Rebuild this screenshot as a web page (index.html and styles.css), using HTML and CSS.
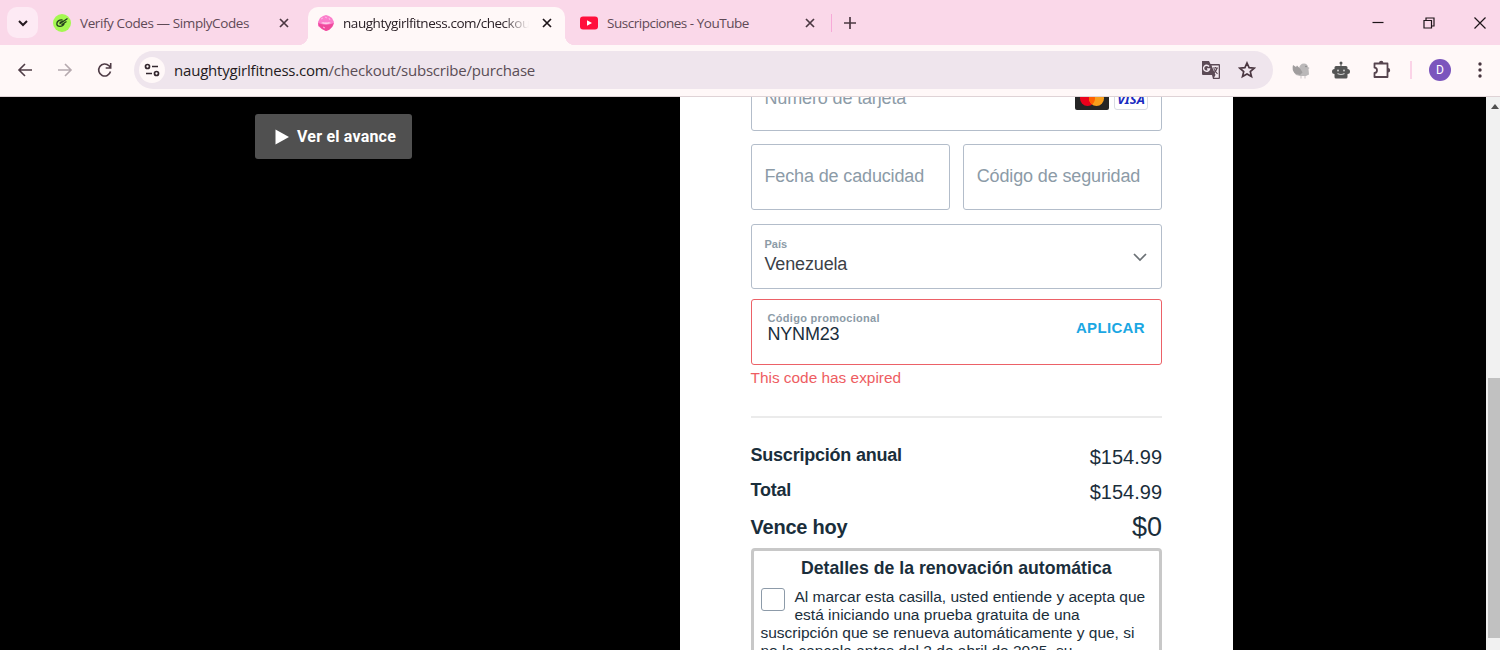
FILE: index.html
```html
<!DOCTYPE html>
<html lang="es">

<head>
    <meta charset="UTF-8">
    <meta name="viewport" content="width=device-width, initial-scale=1.0">
    <title>naughtygirlfitness.com/checkout</title>
    <link rel="stylesheet" href="styles.css">
</head>

<body>
    <div class="browser">
        <!-- tabs -->
        <div class="tabs">
            <button class="tab-search"><svg width="12" height="12" viewBox="0 0 12 12"><path d="M2 4l4 4 4-4" fill="none" stroke="#24191f" stroke-width="2"/></svg></button>
            <div class="tab first">
                <svg class="favicon" width="18" height="18" viewBox="0 0 18 18">
                    <circle cx="9" cy="9" r="9" fill="#a4f850"/>
                    <path d="M9.500 6C6 5.500 3.800 7.500 3.800 10c.2 3 5.500 3.500 7.500-.500M6.500 10l8-5.500M8.500 10.800l5-3.300M6.500 8.500l4-1.500" fill="none" stroke="#24401c" stroke-width="1.300"/>
                </svg>
                <span class="tab-title t1">Verify Codes — SimplyCodes</span>
                <svg class="close" width="10" height="10" viewBox="0 0 10 10"><path d="M1 1l8 8M9 1L1 9"/></svg>
            </div>
            <div class="tab active">
                <svg class="favicon" width="18" height="18" viewBox="0 0 18 18">
                    <path d="M1 8L3 4l3-2 3-1 3 1 3 2 2 4-1 4-3 3-4 2-4-2-4-3z" fill="#fb7ecb"/>
                    <path d="M1 9l3 1 5 1 5-1 3-1-2 4-3 3-3 1-4-2-3-3z" fill="#f04a9c"/>
                    <path d="M4 9c2-1.500 3 0 5-.800 2 .8 3-.7 5 .8-3 1.200-7 1.200-10 0z" fill="#ffd3ec"/>
                    <path d="M4 5l2-1M8 3l2 1M12 4l1 2M6 13l2 1" stroke="#ffb4e6" fill="none"/>
                </svg>
                <span class="tab-title t2">naughtygirlfitness.com/checkou</span>
                <svg class="close" width="10" height="10" viewBox="0 0 10 10"><path d="M1 1l8 8M9 1L1 9"/></svg>
            </div>
            <div class="tab last">
                <svg class="favicon" width="18" height="18" viewBox="0 0 18 18">
                    <rect y="2.500" width="18" height="13" rx="3" fill="#ff0f3c"/>
                    <path d="M7 6.300v5.400L12 9z" fill="#fff"/>
                </svg>
                <span class="tab-title t3">Suscripciones - YouTube</span>
                <svg class="close" width="10" height="10" viewBox="0 0 10 10"><path d="M1 1l8 8M9 1L1 9"/></svg>
            </div>
            <span class="tab-line"></span>
            <svg class="plus" width="12" height="12" viewBox="0 0 12 12"><path d="M6 0v12M0 6h12" stroke="#4b3842" stroke-width="1.700"/></svg>
            <!-- window buttons -->
            <div class="window-btns">
                <svg width="12" height="12" viewBox="0 0 12 12"><path d="M0.500 5.500h11"/></svg>
                <svg width="12" height="12" viewBox="0 0 12 12"><path d="M1 3.500h7.500V11H1zM3 3V1h8v8H9"/></svg>
                <svg width="12" height="12" viewBox="0 0 12 12"><path d="M0.500 0.500l11 11M11.500 0.500l-11 11"/></svg>
            </div>
        </div>

        <!-- toolbar -->
        <div class="toolbar">
            <div class="nav">
                <svg width="16" height="16" viewBox="0 0 16 16"><path d="M15 8H2M8 2L2 8l6 6"/></svg>
                <svg class="off" width="16" height="16" viewBox="0 0 16 16"><path d="M1 8h13M8 2l6 6-6 6"/></svg>
                <svg width="16" height="16" viewBox="0 0 16 16"><path d="M13.500 9.500A6 6 0 1 1 12 3.800L14 6M13.700 1v5H8.700"/></svg>
            </div>
            <div class="address">
                <span class="site-info">
                    <svg width="16" height="16" viewBox="0 0 16 16"><path d="M8 4.500h6M2 11.500h6"/><circle cx="3.500" cy="4.500" r="2"/><circle cx="12.500" cy="11.500" r="2"/></svg>
                </span>
                <span class="url"><b>naughtygirlfitness.com</b>/checkout/subscribe/purchase</span>
                <svg class="translate" width="20" height="20" viewBox="0 0 20 20">
                    <path d="M1 1h7l1.500 3H18q1 0 1 1v13q0 1-1 1h-6l-1-4H2q-1 0-1-1z" fill="#5b4a55"/>
                    <path d="M10.500 5.500H17.700V17.700H13L14.500 15z" fill="#f4eaf1"/>
                    <path d="M8 6.500A3 3 0 1 0 8.500 9H6" fill="none" stroke="#f4eaf1" stroke-width="1.400"/>
                    <path d="M12 8h5M14.500 7v1M16 8q-1 4-4 5M13 9q1 2 3.500 5" fill="none" stroke="#5b4a55" stroke-width="1.100"/>
                </svg>
                <svg class="star" width="18" height="18" viewBox="0 0 18 18"><path d="M9 2l2.100 4.700 5.100.5-3.900 3.400 1.200 5L9 13l-4.500 2.600 1.200-5-3.900-3.400 5.100-.5z" fill="none" stroke="#4b3842" stroke-width="1.700"/></svg>
            </div>
            <div class="extensions">
                <svg width="20" height="20" viewBox="0 0 20 20">
                    <path d="M8 9q.5-5.500 5-5.500 3.500 0 4 3.500l1.500 1-1 1 .5 5.500-3 1.500H9l-4-1-2-3z" fill="#bbb8b9"/>
                    <path d="M2 5l3 2 1-1.500L9.500 9l2 3.500L9 15l-5-1.500Q.5 10 2 5z" fill="#a09d9e"/>
                    <path d="M10 16v2.500M14 16v2.500" stroke="#c9c3c5"/>
                    <circle cx="15" cy="6.500" r=".7" fill="#777"/>
                </svg>
                <svg width="20" height="20" viewBox="0 0 20 20">
                    <circle cx="10" cy="3" r="1.500" fill="#555"/>
                    <path d="M9.500 3h1v3h4.500q1.500 0 1.500 1.500V9q2.500 0 2.500 2.500T16.500 14v3q0 1.500-1.500 1.500H5q-1.500 0-1.500-1.500v-3Q1 14 1 11.500T3.500 9V7.500Q3.500 6 5 6h4.500z" fill="#555"/>
                    <circle cx="7" cy="10.500" r="1" fill="#ccc"/><circle cx="13" cy="10.500" r="1" fill="#ccc"/>
                    <path d="M6.500 13.500q3.500 2 7 0" fill="none" stroke="#ccc" stroke-width="1.200"/>
                </svg>
                <svg width="20" height="20" viewBox="0 0 20 20">
                    <path d="M3.500 3.500H16.500v13.500H3.500v-4q2.500 0 2.500-2.700T3.500 7.600z" fill="none" stroke="#56444e" stroke-width="1.800" stroke-linejoin="round"/>
                    <path d="M8 3a2.200 2.200 0 0 1 4.400 0zM17 8a2.200 2.200 0 0 1 0 4.400z" fill="#56444e"/>
                </svg>
            </div>
            <span class="bar-line"></span>
            <span class="avatar">D</span>
            <svg class="menu" width="4" height="18" viewBox="0 0 4 18"><circle cx="2" cy="3" r="1.700"/><circle cx="2" cy="9" r="1.700"/><circle cx="2" cy="15" r="1.700"/></svg>
        </div>
    </div>

    <!-- page -->
    <div class="page">
        <div class="preview">
            <a class="preview-btn" href="#">
                <svg width="14" height="16" viewBox="0 0 14 16"><path d="M0.500 0.500v15L14 8z" fill="#fff"/></svg>
                <span>Ver el avance</span>
            </a>
        </div>

        <div class="checkout">
            <div class="field number">
                <span class="placeholder">Número de tarjeta</span>
                <div class="cards">
                    <svg width="34" height="23" viewBox="0 0 34 23">
                        <rect width="34" height="23" rx="2" fill="#252525"/>
                        <circle cx="12.500" cy="11.500" r="7.500" fill="#eb001b"/><circle cx="21.500" cy="11.500" r="7.500" fill="#f79e1b"/>
                        <path d="M17 5.500a7.500 7.500 0 0 1 0 12 7.500 7.500 0 0 1 0-12z" fill="#ff5f00"/>
                    </svg>
                    <span class="visa">VISA</span>
                </div>
            </div>
            <div class="half">
                <div class="field"><span class="placeholder">Fecha de caducidad</span></div>
                <div class="field"><span class="placeholder">Código de seguridad</span></div>
            </div>
            <div class="field country">
                <div>
                    <label>País</label>
                    <p>Venezuela</p>
                </div>
                <svg width="14" height="9" viewBox="0 0 14 9"><path d="M1 1l6 6 6-6" fill="none" stroke="#6b7075" stroke-width="1.700"/></svg>
            </div>
            <div class="field promo">
                <div>
                    <label>Código promocional</label>
                    <p>NYNM23</p>
                </div>
                <a class="apply" href="#">APLICAR</a>
            </div>
            <p class="error">This code has expired</p>

            <!-- totals -->
            <div class="summary">
                <div class="row"><b>Suscripción anual</b><span>$154.99</span></div>
                <div class="row"><b>Total</b><span>$154.99</span></div>
                <div class="row due"><b>Vence hoy</b><span>$0</span></div>
            </div>

            <div class="renewal">
                <h3>Detalles de la renovación automática</h3>
                <span class="check"></span>
                <p>Al marcar esta casilla, usted entiende y acepta que está iniciando una prueba gratuita de una suscripción que se renueva automáticamente y que, si no la cancela antes del 2 de abril de 2025, su</p>
            </div>
        </div>

        <div class="scrollbar">
            <svg width="8" height="5" viewBox="0 0 8 5"><path d="M0 5l4-5 4 5z" fill="#505050"/></svg>
            <div class="thumb"></div>
        </div>
    </div>
</body>

</html>
```
FILE: styles.css
```css
* {
    margin: 0;
    padding: 0;
    box-sizing: border-box;
}

body {
    width: 1500px;
    height: 650px;
    overflow: hidden;
    display: flex;
    flex-direction: column;
    font-family: "Liberation Sans", Arial, sans-serif;
    background: #000;
}

svg {
    display: block;
    flex: none;
}

a {
    text-decoration: none;
}

.browser {
    flex: none;
    height: 97px;
    background: #fff8f8;
    border-bottom: 1px solid #dfd3d6;
    font-family: "Open Sans", "Noto Sans", sans-serif;
}

/* tabs */
.tabs {
    height: 45px;
    padding-left: 7px;
    display: flex;
    align-items: center;
    background: #fad8e9;
}

.tab-search {
    width: 31px;
    height: 31px;
    border: 0;
    border-radius: 10px;
    background: #fdeaf4;
    display: flex;
    align-items: center;
    justify-content: center;
}

.tab {
    height: 38px;
    padding-bottom: 6px;
    display: flex;
    align-items: center;
    align-self: flex-end;
    color: #5f4a56;
}

.tab.first {
    width: 270px;
    padding-left: 15px;
}

.tab.active {
    width: 257px;
    padding-left: 9px;
    position: relative;
    border-radius: 10px 10px 0 0;
    background: #fff8f8;
    color: #2a2026;
}

/* curved feet of the active tab */
.tab.active::before,
.tab.active::after {
    content: '';
    width: 10px;
    height: 10px;
    position: absolute;
    bottom: 0;
    left: -10px;
    background: radial-gradient(circle at 0 0, transparent 10px, #fff8f8 10.500px);
}

.tab.active::after {
    left: 100%;
    background: radial-gradient(circle at 100% 0, transparent 10px, #fff8f8 10.500px);
}

.tab.last {
    width: 266px;
    padding-left: 15px;
}

.tab-title {
    width: 187px;
    margin-left: 9px;
    white-space: nowrap;
    font-size: 13.500px;
    line-height: 20px;
}

.active .tab-title {
    width: 186px;
    margin-left: 8px;
    -webkit-mask-image: linear-gradient(to right, #000 160px, transparent 186px);
    mask-image: linear-gradient(to right, #000 160px, transparent 186px);
}

.t1 {
    letter-spacing: -0.400px;
}

.t2 {
    letter-spacing: -0.450px;
}

.t3 {
    letter-spacing: -0.480px;
}

.close {
    margin-left: 12px;
    fill: none;
    stroke: #4b3842;
    stroke-width: 1.700;
}

.active .close {
    margin-left: 13px;
    stroke: #1d1519;
}

.tab.last .close {
    margin-left: 11px;
}

.tab-line {
    width: 1px;
    height: 18px;
    background: #f7a9d8;
}

.plus {
    margin-left: 12px;
}

.window-btns {
    margin-left: auto;
    padding-right: 14px;
    display: flex;
    gap: 39px;
}

.window-btns svg {
    fill: none;
    stroke: #1d1519;
    stroke-width: 1.200;
}

/* toolbar */
.toolbar {
    height: 51px;
    padding: 0 17px;
    display: flex;
    align-items: center;
}

.nav {
    padding-bottom: 1px;
    display: flex;
    gap: 24px;
}

.nav svg {
    fill: none;
    stroke: #4f3c46;
    stroke-width: 1.600;
}

.nav .off {
    stroke: #b5a9ae;
}

.address {
    width: 1139px;
    height: 38px;
    margin: 0 0 1px 21px;
    padding: 0 17px 1px 5px;
    display: flex;
    align-items: center;
    border-radius: 19px;
    background: #efe5ed;
}

.site-info {
    width: 26px;
    height: 26px;
    border-radius: 50%;
    background: #fff8f8;
    display: flex;
    align-items: center;
    justify-content: center;
}

.site-info svg {
    fill: none;
    stroke: #33272e;
    stroke-width: 1.700;
}

.url {
    margin-left: 9px;
    font-size: 15px;
    letter-spacing: -0.200px;
    color: #5a4d56;
    white-space: nowrap;
}

.url b {
    font-weight: 400;
    color: #241b21;
}

.translate {
    margin-left: auto;
    margin-right: 17px;
}

.extensions {
    margin-left: 18px;
    padding-bottom: 1px;
    display: flex;
    gap: 20px;
}

.bar-line {
    width: 2px;
    height: 18px;
    margin: 0 0 1px 19px;
    background: #fbd3e7;
}

.avatar {
    width: 22px;
    height: 22px;
    margin: 0 0 1px 17px;
    border-radius: 50%;
    background: #7b55bd;
    color: #fff;
    font: 12px/22px Roboto, sans-serif;
    text-align: center;
}

.menu {
    margin: 0 0 1px 27px;
    fill: #46343e;
}

/* page */
.page {
    flex: 1;
    min-height: 0;
    overflow: hidden;
    display: flex;
}

.preview {
    width: 680px;
    padding: 17px 0 0 255px;
}

.preview-btn {
    width: 157px;
    height: 45px;
    padding-left: 20px;
    display: flex;
    align-items: center;
    gap: 8px;
    border-radius: 3px;
    background: #505050;
    color: #fff;
    font: bold 16px Roboto, sans-serif;
    letter-spacing: 0.200px;
}

.checkout {
    width: 553px;
    padding: 0 71px 0 70.500px;
    background: #fff;
    color: #1a2e3b;
}

.field {
    height: 66px;
    padding: 0 13px;
    display: flex;
    align-items: center;
    justify-content: space-between;
    border: 1px solid #b3bdca;
    border-radius: 3px;
}

.field.number {
    margin-top: -32px;
}

.placeholder {
    padding-bottom: 1px;
    font-size: 18px;
    letter-spacing: -0.140px;
    color: #8c9ba7;
    white-space: nowrap;
}

.number .placeholder {
    padding: 1px 0 0;
}

.cards {
    display: flex;
    gap: 5px;
}

.visa {
    width: 34px;
    height: 23px;
    border: 1px solid #d9dce3;
    border-radius: 3px;
    color: #1a2bc0;
    font: italic bold 13px/22px "Noto Sans", sans-serif;
    text-align: center;
}

.half {
    margin: 13px 0 14px;
    display: grid;
    grid-template-columns: 1fr 1fr;
    gap: 13px;
}

.field label {
    display: block;
    font-size: 11px;
    font-weight: bold;
    line-height: 13px;
    color: #8c9ba7;
}

.country {
    height: 65px;
}

.country > div {
    padding-bottom: 1px;
}

.country svg {
    margin: 2px 1px 0 0;
}

.country p {
    margin-top: 3px;
    font-size: 18px;
    line-height: 20px;
    letter-spacing: -0.150px;
    color: #3c4147;
}

.promo {
    margin-top: 10px;
    padding: 0 16px;
    align-items: flex-start;
    border-color: #ec6167;
}

.promo > div {
    padding-top: 12px;
}

.promo label {
    letter-spacing: 0.300px;
}

.promo p {
    font-size: 18px;
    line-height: 18px;
    letter-spacing: -0.200px;
}

.apply {
    padding-top: 19px;
    font-size: 15px;
    font-weight: bold;
    line-height: 18px;
    letter-spacing: 0.350px;
    color: #1ba7e3;
}

.error {
    margin-top: 3px;
    font-size: 15.400px;
    line-height: 20px;
    color: #ee5d62;
}

.summary {
    margin-top: 28px;
    padding-top: 19px;
    border-top: 2px solid #ebebeb;
}

.row {
    height: 36px;
    display: flex;
    justify-content: space-between;
    font-size: 18px;
    line-height: 35px;
}

.row:first-child {
    line-height: 36px;
}

.row b {
    letter-spacing: -0.220px;
}

.row span {
    padding-top: 2px;
    font-size: 20px;
}

.row.due {
    height: 39px;
    font-size: 20px;
    line-height: 36px;
}

.row.due span {
    padding: 0;
    font-size: 27px;
}

.renewal {
    height: 150px;
    padding: 7px 7px;
    border: 3px solid #c8c8c8;
    border-radius: 4px;
}

.renewal h3 {
    margin-bottom: 10px;
    font-size: 17.700px;
    line-height: 20px;
    text-align: center;
}

.check {
    width: 24px;
    height: 23px;
    margin: 0 10px 10px 0;
    float: left;
    border: 1px solid #8d9ba9;
    border-radius: 3px;
}

.renewal p {
    font-size: 15.500px;
    line-height: 18px;
    letter-spacing: 0;
}

/* scrollbar */
.scrollbar {
    width: 14px;
    margin-left: auto;
    padding: 7px 0 0 2px;
    background: #f1f1f1;
}

.scrollbar svg {
    margin-left: 3px;
}

.thumb {
    height: 260px;
    margin-top: 269px;
    background: #c1c1c1;
}
```
